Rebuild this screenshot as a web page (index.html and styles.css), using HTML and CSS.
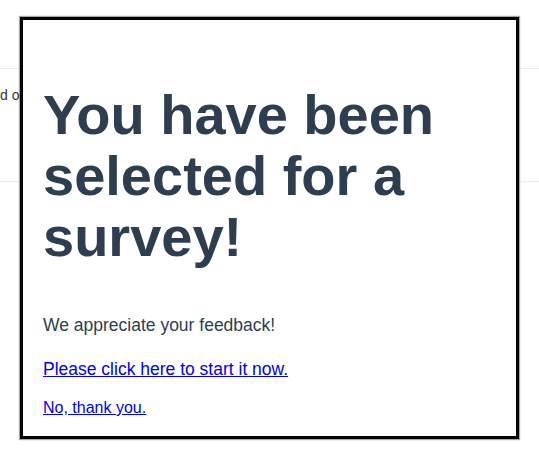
FILE: index.html
```html
<!DOCTYPE html>
<html>
<head>
<meta charset="utf-8">
<link rel="stylesheet" href="styles.css">
</head>
<body>
<div class="page">
  <div class="rule rule-top"></div>
  <div class="bg-text">d o</div>
  <div class="rule rule-bottom"></div>
</div>
<div class="modal">
  <h1 class="title">You have been selected for a survey!</h1>
  <p class="lead">We appreciate your feedback!</p>
  <p class="action"><a href="#">Please click here to start it now.</a></p>
  <p class="action action-last"><a href="#">No, thank you.</a></p>
</div>
</body>
</html>
```

FILE: styles.css
```css
html, body {
  margin: 0;
  padding: 0;
  background: #fff;
  width: 539px;
  height: 460px;
  overflow: hidden;
  font-family: "Liberation Sans", Arial, sans-serif;
}

.page {
  padding-top: 68px;
}

.rule {
  height: 1px;
  background: #ececec;
}

.bg-text {
  font-size: 14px;
  color: #333;
  padding: 18px 0 0 0;
  height: 94px;
  line-height: 16px;
}

.modal {
  position: absolute;
  left: 20px;
  top: 17px;
  height: 416px;
  width: 453px;
  padding: 0 20px;
  border: 3px solid #000;
  background: #fff;
  box-shadow: 0 0 1px 1px rgba(0, 0, 0, 0.35);
}

.title {
  margin: 64px 0 0 0;
  font-size: 56px;
  line-height: 61px;
  font-weight: bold;
  color: #2c3e50;
}

.lead {
  margin: 47px 0 0 0;
  font-size: 17.5px;
  line-height: 22px;
  color: #2c3e50;
}

.action {
  margin: 22px 0 0 0;
  font-size: 17.5px;
  line-height: 22px;
}

.action-last {
  margin-top: 18px;
  font-size: 16px;
  line-height: 20px;
}

.action a {
  color: #0000ee;
  text-decoration: underline;
}
```
